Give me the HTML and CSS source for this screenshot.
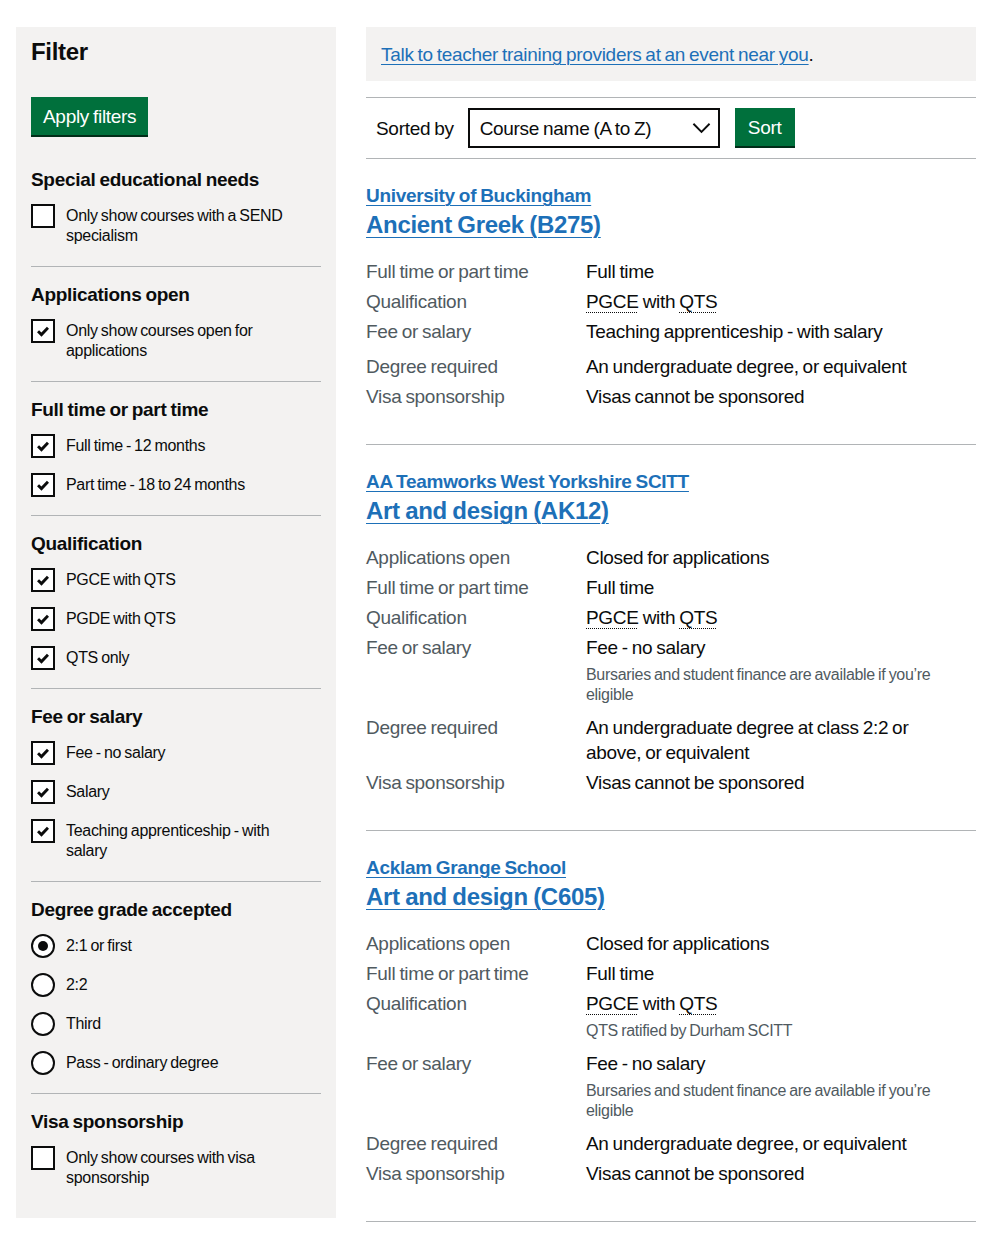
FILE: index.html
```html
<!DOCTYPE html>
<html lang="en">
<head>
<meta charset="utf-8">
<title>Find teacher training courses</title>
<link rel="stylesheet" href="styles.css">
</head>
<body>
<div class="page">
  <aside class="filter-panel">
    <h2 class="filter-title">Filter</h2>
    <button class="btn btn-apply" type="button">Apply filters</button>

    <section class="filter-section">
      <h3 class="filter-heading">Special educational needs</h3>
      <div class="option"><span class="box"></span><span class="option-label">Only show courses with a SEND specialism</span></div>
    </section>

    <section class="filter-section">
      <h3 class="filter-heading">Applications open</h3>
      <div class="option"><span class="box"><svg class="tick" viewBox="0 0 20 20"><path d="M4.5 10.2 L8.3 14 L15.5 6.5"/></svg></span><span class="option-label">Only show courses open for applications</span></div>
    </section>

    <section class="filter-section">
      <h3 class="filter-heading">Full time or part time</h3>
      <div class="option"><span class="box"><svg class="tick" viewBox="0 0 20 20"><path d="M4.5 10.2 L8.3 14 L15.5 6.5"/></svg></span><span class="option-label">Full time - 12 months</span></div>
      <div class="option"><span class="box"><svg class="tick" viewBox="0 0 20 20"><path d="M4.5 10.2 L8.3 14 L15.5 6.5"/></svg></span><span class="option-label">Part time - 18 to 24 months</span></div>
    </section>

    <section class="filter-section">
      <h3 class="filter-heading">Qualification</h3>
      <div class="option"><span class="box"><svg class="tick" viewBox="0 0 20 20"><path d="M4.5 10.2 L8.3 14 L15.5 6.5"/></svg></span><span class="option-label">PGCE with QTS</span></div>
      <div class="option"><span class="box"><svg class="tick" viewBox="0 0 20 20"><path d="M4.5 10.2 L8.3 14 L15.5 6.5"/></svg></span><span class="option-label">PGDE with QTS</span></div>
      <div class="option"><span class="box"><svg class="tick" viewBox="0 0 20 20"><path d="M4.5 10.2 L8.3 14 L15.5 6.5"/></svg></span><span class="option-label">QTS only</span></div>
    </section>

    <section class="filter-section">
      <h3 class="filter-heading">Fee or salary</h3>
      <div class="option"><span class="box"><svg class="tick" viewBox="0 0 20 20"><path d="M4.5 10.2 L8.3 14 L15.5 6.5"/></svg></span><span class="option-label">Fee - no salary</span></div>
      <div class="option"><span class="box"><svg class="tick" viewBox="0 0 20 20"><path d="M4.5 10.2 L8.3 14 L15.5 6.5"/></svg></span><span class="option-label">Salary</span></div>
      <div class="option"><span class="box"><svg class="tick" viewBox="0 0 20 20"><path d="M4.5 10.2 L8.3 14 L15.5 6.5"/></svg></span><span class="option-label">Teaching apprenticeship - with salary</span></div>
    </section>

    <section class="filter-section">
      <h3 class="filter-heading">Degree grade accepted</h3>
      <div class="option"><span class="radio"><span class="radio-dot"></span></span><span class="option-label">2:1 or first</span></div>
      <div class="option"><span class="radio"></span><span class="option-label">2:2</span></div>
      <div class="option"><span class="radio"></span><span class="option-label">Third</span></div>
      <div class="option"><span class="radio"></span><span class="option-label">Pass - ordinary degree</span></div>
    </section>

    <section class="filter-section filter-section-last">
      <h3 class="filter-heading">Visa sponsorship</h3>
      <div class="option"><span class="box"></span><span class="option-label">Only show courses with visa sponsorship</span></div>
    </section>
  </aside>

  <main class="results">
    <div class="inset">
      <a class="link" href="#">Talk to teacher training providers at an event near you</a>.
    </div>

    <div class="sort-row">
      <span class="sort-label">Sorted by</span>
      <div class="select">
        <span>Course name (A to Z)</span>
        <svg class="chevron" viewBox="0 0 20 12"><path d="M1.5 1.5 L10 10 L18.5 1.5"/></svg>
      </div>
      <button class="btn btn-sort" type="button">Sort</button>
    </div>

    <article class="course">
      <a class="course-provider" href="#">University of Buckingham</a>
      <a class="course-title" href="#">Ancient Greek (B275)</a>
      <dl class="summary">
        <div class="row"><dt>Full time or part time</dt><dd>Full time</dd></div>
        <div class="row"><dt>Qualification</dt><dd><abbr>PGCE</abbr> with <abbr>QTS</abbr></dd></div>
        <div class="row row-spaced"><dt>Fee or salary</dt><dd>Teaching apprenticeship - with salary</dd></div>
        <div class="row"><dt>Degree required</dt><dd>An undergraduate degree, or equivalent</dd></div>
        <div class="row"><dt>Visa sponsorship</dt><dd>Visas cannot be sponsored</dd></div>
      </dl>
    </article>

    <article class="course">
      <a class="course-provider" href="#">AA Teamworks West Yorkshire SCITT</a>
      <a class="course-title" href="#">Art and design (AK12)</a>
      <dl class="summary">
        <div class="row"><dt>Applications open</dt><dd>Closed for applications</dd></div>
        <div class="row"><dt>Full time or part time</dt><dd>Full time</dd></div>
        <div class="row"><dt>Qualification</dt><dd><abbr>PGCE</abbr> with <abbr>QTS</abbr></dd></div>
        <div class="row"><dt>Fee or salary</dt><dd>Fee - no salary<p class="hint">Bursaries and student finance are available if you’re eligible</p></dd></div>
        <div class="row"><dt>Degree required</dt><dd>An undergraduate degree at class 2:2 or above, or equivalent</dd></div>
        <div class="row"><dt>Visa sponsorship</dt><dd>Visas cannot be sponsored</dd></div>
      </dl>
    </article>

    <article class="course">
      <a class="course-provider" href="#">Acklam Grange School</a>
      <a class="course-title" href="#">Art and design (C605)</a>
      <dl class="summary">
        <div class="row"><dt>Applications open</dt><dd>Closed for applications</dd></div>
        <div class="row"><dt>Full time or part time</dt><dd>Full time</dd></div>
        <div class="row"><dt>Qualification</dt><dd><abbr>PGCE</abbr> with <abbr>QTS</abbr><p class="hint">QTS ratified by Durham SCITT</p></dd></div>
        <div class="row"><dt>Fee or salary</dt><dd>Fee - no salary<p class="hint">Bursaries and student finance are available if you’re eligible</p></dd></div>
        <div class="row"><dt>Degree required</dt><dd>An undergraduate degree, or equivalent</dd></div>
        <div class="row"><dt>Visa sponsorship</dt><dd>Visas cannot be sponsored</dd></div>
      </dl>
    </article>
  </main>
</div>
</body>
</html>
```

FILE: styles.css
```css
* { box-sizing: border-box; }

html, body {
  margin: 0;
  padding: 0;
  background: #ffffff;
}

body {
  font-family: "Liberation Sans", Arial, sans-serif;
  color: #0b0c0c;
  letter-spacing: -0.3px;
  word-spacing: -1px;
}

.page {
  display: grid;
  grid-template-columns: 320px 610px;
  column-gap: 30px;
  align-items: start;
  padding: 27px 0 0 16px;
}

/* ---------- Filter panel ---------- */
.filter-panel {
  background: #f3f2f1;
  padding: 10px 15px 10px;
}

.filter-title {
  margin: 0 0 30px;
  font-size: 24px;
  line-height: 30px;
  font-weight: 700;
}

.btn {
  display: inline-block;
  font-family: inherit;
  font-size: 19px;
  line-height: 19px;
  letter-spacing: -0.3px;
  word-spacing: -1px;
  color: #ffffff;
  background: #00703c;
  border: 2px solid transparent;
  border-radius: 0;
  box-shadow: 0 2px 0 #002d18;
  padding: 8px 10px 7px;
  margin: 0;
  cursor: pointer;
}

.btn-apply {
  margin-bottom: 32px;
}

.filter-section {
  padding: 15px 0 18px;
  border-bottom: 1px solid #b1b4b6;
}

.filter-section:first-of-type {
  padding-top: 0;
}

.filter-section-last {
  border-bottom: 0;
}

.filter-heading {
  margin: 0 0 12px;
  font-size: 19px;
  line-height: 25px;
  font-weight: 700;
}

.option {
  display: flex;
  align-items: flex-start;
  gap: 11px;
  margin-bottom: 15px;
}

.option:last-child {
  margin-bottom: 0;
}

.box,
.radio {
  flex: 0 0 24px;
  width: 24px;
  height: 24px;
  border: 2px solid #0b0c0c;
  background: #ffffff;
  display: flex;
  align-items: center;
  justify-content: center;
}

.radio {
  border-radius: 50%;
}

.radio-dot {
  width: 10px;
  height: 10px;
  border-radius: 50%;
  background: #0b0c0c;
}

.tick {
  width: 18px;
  height: 18px;
  fill: none;
  stroke: #0b0c0c;
  stroke-width: 3.2;
  stroke-linecap: butt;
  stroke-linejoin: miter;
}

.option-label {
  font-size: 16px;
  line-height: 20px;
  padding: 2px 18px 2px 0;
}

/* ---------- Results ---------- */
.inset {
  background: #f3f2f1;
  padding: 15px 15px 14px;
  font-size: 19px;
  line-height: 25px;
  margin-bottom: 16px;
}

.link,
.course-provider,
.course-title {
  color: #1d70b8;
  text-decoration: underline;
  text-decoration-thickness: 1px;
  text-underline-offset: 0.16em;
}

.sort-row {
  display: flex;
  align-items: center;
  border-top: 1px solid #b1b4b6;
  border-bottom: 1px solid #b1b4b6;
  padding: 10px 0 10px 10px;
}

.sort-label {
  font-size: 19px;
  line-height: 25px;
  margin-right: 14px;
}

.select {
  display: flex;
  align-items: center;
  justify-content: space-between;
  width: 252px;
  height: 40px;
  border: 2px solid #0b0c0c;
  padding: 0 7px 0 10px;
  font-size: 19px;
  line-height: 25px;
  margin-right: 15px;
}

.chevron {
  width: 19px;
  height: 12px;
  fill: none;
  stroke: #0b0c0c;
  stroke-width: 2;
}

.btn-sort {
  height: 38px;
  width: 60px;
  padding: 8px 0 7px;
  margin-bottom: 2px;
  text-align: center;
}

.course {
  display: flex;
  flex-direction: column;
  align-items: flex-start;
  padding: 24px 0 30px;
  border-bottom: 1px solid #b1b4b6;
}

.course-provider {
  font-size: 19px;
  line-height: 25px;
  font-weight: 700;
}

.course-title {
  margin-top: 2px;
  font-size: 24px;
  line-height: 30px;
  font-weight: 700;
}

.summary {
  margin: 19px 0 0;
  width: 100%;
}

.row {
  display: grid;
  grid-template-columns: 220px 370px;
  margin-bottom: 5px;
}

.row-spaced {
  margin-bottom: 10px;
}

.row dt,
.row dd {
  margin: 0;
  font-size: 19px;
  line-height: 25px;
}

.row dt {
  color: #505a5f;
}

abbr {
  text-decoration: underline dotted;
  text-decoration-thickness: 1px;
  text-underline-offset: 0.2em;
}

.hint {
  margin: 5px 0 5px;
  font-size: 16px;
  line-height: 20px;
  color: #505a5f;
}
```
